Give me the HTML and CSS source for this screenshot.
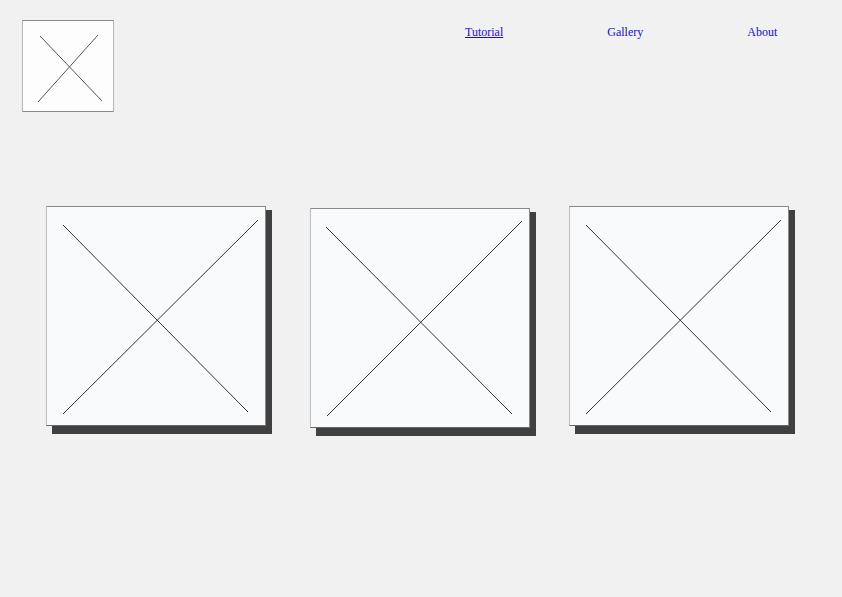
FILE: index.html
```html
<!DOCTYPE html>
<html>
<head>
<meta charset="utf-8">
<link rel="stylesheet" href="styles.css">
</head>
<body>
<header class="header">
  <div class="logo">
    <svg class="x" width="92" height="92" viewBox="0 0 92 92">
      <line x1="18" y1="16" x2="80" y2="81"/>
      <line x1="76" y1="15" x2="16" y2="82"/>
    </svg>
  </div>
  <nav class="nav">
    <a class="link underline" href="#">Tutorial</a>
    <a class="link" href="#">Gallery</a>
    <a class="link" href="#">About</a>
  </nav>
</header>
<main class="cards">
  <div class="card card-1">
    <svg class="x" width="220" height="220" viewBox="0 0 220 220">
      <line x1="17" y1="19" x2="202" y2="206"/>
      <line x1="212" y1="14" x2="17" y2="208"/>
    </svg>
  </div>
  <div class="card card-2">
    <svg class="x" width="220" height="220" viewBox="0 0 220 220">
      <line x1="16" y1="19" x2="202" y2="206"/>
      <line x1="212" y1="13" x2="17" y2="208"/>
    </svg>
  </div>
  <div class="card card-3">
    <svg class="x" width="220" height="220" viewBox="0 0 220 220">
      <line x1="17" y1="19" x2="202" y2="206"/>
      <line x1="212" y1="14" x2="17" y2="208"/>
    </svg>
  </div>
</main>
</body>
</html>
```
FILE: styles.css
```css
html, body {
  margin: 0;
  padding: 0;
  background: #f1f1f1;
  font-family: "Liberation Serif", "Times New Roman", serif;
}
body {
  min-height: 597px;
}
.header {
  display: flex;
  align-items: flex-start;
  padding: 20px 0 0 22px;
}
.logo {
  width: 92px;
  height: 92px;
  box-sizing: border-box;
  border: 1px solid #8a8a8a;
  border-left-color: #b8b8b8;
  border-right-color: #b8b8b8;
  background: #fdfdfd;
  position: relative;
}
.logo .x {
  position: absolute;
  left: -1px;
  top: -1px;
}
.logo .x line {
  stroke: #555;
  stroke-width: 1;
}
.nav {
  display: flex;
  gap: 104px;
  margin-left: 351px;
  padding-top: 5px;
  font-size: 12px;
  line-height: 14px;
}
.link {
  color: #1a0dcc;
  text-decoration: none;
}
.link.underline {
  text-decoration: underline;
}
.cards {
  display: flex;
  align-items: flex-start;
  margin-top: 94px;
  padding: 0 0 20px 46px;
}
.card {
  position: relative;
  width: 220px;
  height: 220px;
  box-sizing: border-box;
  border: 1px solid #888;
  border-left-color: #bcbcbc;
  border-bottom-color: #666;
  background: #f9fafc;
  box-shadow: 6px 4px 0 #404040, 6px 8px 0 #404040;
}
.card .x {
  position: absolute;
  left: -1px;
  top: -1px;
}
.card .x line {
  stroke: #333;
  stroke-width: 1;
}
.card-2 {
  margin-left: 44px;
  margin-top: 2px;
}
.card-3 {
  margin-left: 39px;
}
```
